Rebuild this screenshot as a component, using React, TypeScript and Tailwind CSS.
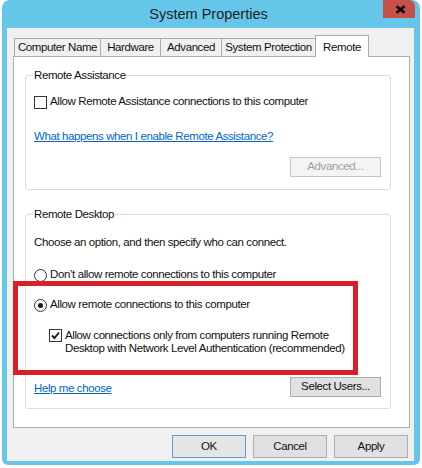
import React from "react";

function Checkbox({ checked }: { checked?: boolean }) {
  return (
    <div className="w-[13px] h-[13px] shrink-0 border border-[#333333] bg-white flex items-center justify-center">
      {checked && (
        <svg width="11" height="11" viewBox="0 0 11 11">
          <path d="M2 5.5 L4.5 8 L9 2.5" fill="none" stroke="#1a1a1a" strokeWidth="1.9" />
        </svg>
      )}
    </div>
  );
}

function Radio({ checked }: { checked?: boolean }) {
  return (
    <div className="w-[13px] h-[13px] shrink-0 rounded-full border border-[#333333] bg-white flex items-center justify-center">
      {checked && <div className="w-[5px] h-[5px] rounded-full bg-[#1a1a1a]" />}
    </div>
  );
}

function Button({ children, w, primary, disabled }: { children: React.ReactNode; w: string; primary?: boolean; disabled?: boolean }) {
  const cls = disabled
    ? "bg-[#f4f4f4] border-[#c6c6c6] text-[#a0a0a0]"
    : primary
    ? "bg-[#e5e5e5] border-[#5b9ad9] text-[#111]"
    : "bg-[#e1e1e1] border-[#adadad] text-[#111]";
  return (
    <div className={`${w} h-full border flex items-center justify-center ${cls}`}>{children}</div>
  );
}

const tabBase = "h-[18px] border-t border-l border-[#acacac] bg-[#f0f0f0] flex items-center justify-center text-[#111]";

export default function App() {
  return (
    <div className="relative w-[422px] h-[468px] bg-white overflow-hidden font-['Liberation_Sans',Arial,sans-serif] text-[11.5px] tracking-[-0.4px] text-[#111]">
      <div className="ml-[2px] w-[418px] h-[465px] bg-[#66c6ea] rounded-t-[8px] rounded-b-[6px] flex flex-col pb-[4px]">
        {/* Title bar */}
        <div className="h-[28px] grid grid-cols-[1fr_auto_1fr] pr-[5px]">
          <div />
          <div className="self-center text-[14.5px] tracking-normal text-[#1e1e1e] pt-[1px]">System Properties</div>
          <div className="justify-self-end w-[32px] h-[18px] bg-[#c7504b] rounded-tr-[6px] flex items-center justify-center pl-[3px]">
            <svg width="11" height="9" viewBox="0 0 11 9">
              <path d="M1.5 1.2 L9.5 7.8 M9.5 1.2 L1.5 7.8" stroke="#000000" strokeWidth="2.6" />
            </svg>
          </div>
        </div>
        {/* Client */}
        <div className="ml-[5px] mr-[6px] flex-1 bg-[#f0f0f0] pl-[6px] pt-[7px] flex flex-col">
          {/* Tabs */}
          <div className="flex items-end h-[21px] pl-[1px]">
            <div className={`${tabBase} w-[86px]`}>Computer Name</div>
            <div className={`${tabBase} w-[60px]`}>Hardware</div>
            <div className={`${tabBase} w-[61px]`}>Advanced</div>
            <div className={`${tabBase} w-[94px]`}>System Protection</div>
            <div className="relative z-10 -mb-px w-[54px] h-[22px] border-t border-l border-r border-[#acacac] bg-white flex items-start justify-center pt-[3px]">
              Remote
            </div>
          </div>
          {/* Panel */}
          <div className="w-[397px] h-[372px] border border-[#adadad] bg-white pl-[11px] pt-[10px] flex flex-col">
            <fieldset className="w-[366px] border border-[#dcdcdc] rounded-[3px] pl-[8px] pr-[9px] pb-[12px] flex flex-col">
              <legend className="px-[1px] leading-[16px] -ml-[1px]">Remote Assistance</legend>
              <div className="mt-[11px] h-[16px] flex items-center gap-[3px]">
                <Checkbox />
                <span>Allow Remote Assistance connections to this computer</span>
              </div>
              <div className="mt-[19px] h-[16px] flex items-center">
                <span className="text-[#0066cc] underline">What happens when I enable Remote Assistance?</span>
              </div>
              <div className="mt-[12px] h-[20px] self-end">
                <Button w="w-[91px]" disabled>Advanced...</Button>
              </div>
            </fieldset>

            <fieldset className="mt-[16px] w-[366px] border border-[#dcdcdc] rounded-[3px] pl-[8px] pr-[9px] pb-[11px] flex flex-col">
              <legend className="px-[1px] leading-[16px] -ml-[1px]">Remote Desktop</legend>
              <div className="mt-[13px] h-[16px] flex items-center">Choose an option, and then specify who can connect.</div>
              <div className="mt-[16px] h-[16px] flex items-center gap-[3px]">
                <Radio />
                <span>Don’t allow remote connections to this computer</span>
              </div>
              <div className="mt-[14px] h-[16px] flex items-center gap-[3px]">
                <Radio checked />
                <span>Allow remote connections to this computer</span>
              </div>
              <div className="mt-[16px] pl-[15px] flex items-start gap-[3px]">
                <Checkbox checked />
                <span className="leading-[13px]">
                  Allow connections only from computers running Remote
                  <br />
                  Desktop with Network Level Authentication (recommended)
                </span>
              </div>
              <div className="mt-[22px] h-[20px] flex items-center justify-between">
                <span className="text-[#0066cc] underline pt-[3px]">Help me choose</span>
                <Button w="w-[91px]">Select Users...</Button>
              </div>
            </fieldset>
          </div>
          {/* Bottom buttons */}
          <div className="mt-[7px] h-[23px] flex justify-end gap-[7px] pr-[6px]">
            <Button w="w-[74px]" primary>OK</Button>
            <Button w="w-[74px]">Cancel</Button>
            <Button w="w-[74px]">Apply</Button>
          </div>
        </div>
      </div>
      {/* Red annotation */}
      <div className="absolute left-[13px] top-[281px] w-[345px] h-[94px] border-[5px] border-[#d8202a] pointer-events-none" />
    </div>
  );
}
